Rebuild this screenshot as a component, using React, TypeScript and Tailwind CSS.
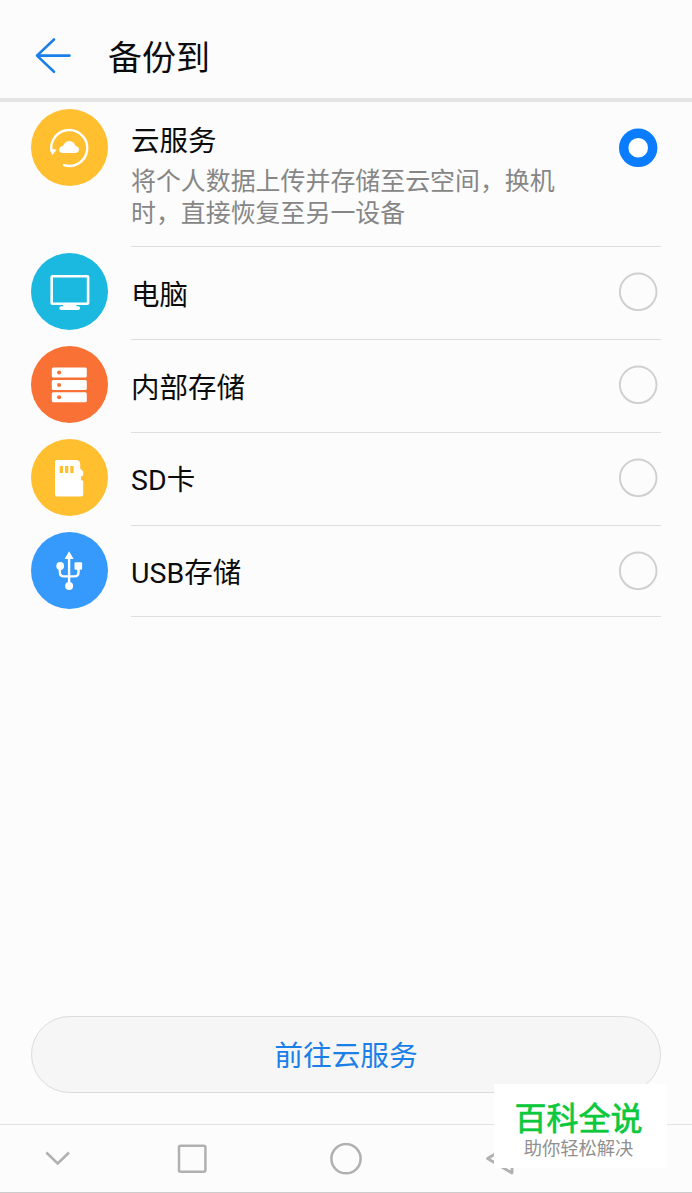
import type { ReactNode } from "react";

function CloudIcon() {
  return (
    <svg viewBox="0 0 77 77" className="size-full" fill="none">
      <path d="M20.500 42A18 18 0 1 1 33 56.200" stroke="#fff" strokeWidth="2.400" strokeLinecap="round" />
      <path d="M19 39.300l6.600 1.400-4.500 5.600z" fill="#fff" />
      <path
        d="M31.400 44a3.300 3.300 0 0 1-.8-6.500c1.400-.4 1.800-1.200 2.500-2.400 2.200-4.200 8.200-4.200 10.300-.4.700 1.300 1.100 2.200 2.400 2.700a3.400 3.400 0 0 1-.9 6.600z"
        fill="#fff"
      />
    </svg>
  );
}

function ComputerIcon() {
  return (
    <svg viewBox="0 0 77 77" className="size-full" fill="none">
      <rect x="20.700" y="23.200" width="36.400" height="27.600" rx=".8" stroke="#fff" strokeWidth="2.600" />
      <path d="M32 51h13.400v2.200h1.800a1.900 1.900 0 0 1 0 3.800H30.200a1.900 1.900 0 0 1 0-3.800H32z" fill="#fff" />
    </svg>
  );
}

function InternalIcon() {
  return (
    <svg viewBox="0 0 77 77" className="size-full" fill="#fff">
      <rect x="20.800" y="21.400" width="35" height="10.200" rx="1.500" />
      <rect x="20.800" y="33.900" width="35" height="10" rx="1.500" />
      <rect x="20.800" y="46.200" width="35" height="10" rx="1.500" />
      <g fill="#fa7136">
        <circle cx="28.100" cy="26.500" r="2" />
        <circle cx="28.100" cy="39" r="2" />
        <circle cx="28.100" cy="51.200" r="2" />
      </g>
    </svg>
  );
}

function SdIcon() {
  return (
    <svg viewBox="0 0 77 77" className="size-full">
      <path
        d="M26 21h19c2.600 0 4.200 1.600 4.200 4.200v3.300c0 1.200.6 1.700 1.500 2.400.9.600 1.500 1.300 1.500 2.500v3l-2.200 1v3.600l2.200.8V55.500c0 1.300-.7 2-2 2H26c-1.300 0-2-.7-2-2V23c0-1.300.7-2 2-2z"
        fill="#fff"
      />
      <path d="M28.700 27H32v7h-3.300zM34 27h3.300v7H34zM39.300 27h3.300v7h-3.300z" fill="#ffbf2e" />
    </svg>
  );
}

function UsbIcon() {
  return (
    <svg viewBox="0 0 77 77" className="size-full" fill="#fff">
      <path d="M38.100 19.200l4.500 7.800h-9z" />
      <circle cx="38.100" cy="54" r="4" />
      <circle cx="29.200" cy="34" r="3.900" />
      <rect x="43.500" y="30.300" width="7.600" height="7.400" rx="1" />
      <path
        d="M38.100 25v27M28.900 36v4.500c0 2.500 1.500 3.900 4 3.900h10.600c2.500 0 4-1.400 4-3.900V36"
        stroke="#fff"
        strokeWidth="2.400"
        fill="none"
      />
    </svg>
  );
}

function Radio({ checked }: { checked?: boolean }) {
  return (
    <svg viewBox="0 0 39 39" className="size-[39px] shrink-0">
      {checked ? (
        <circle cx="19.200" cy="19.800" r="14.500" fill="#fff" stroke="#0a7cff" strokeWidth="9.400" />
      ) : (
        <circle cx="19.200" cy="19.800" r="18.300" fill="none" stroke="#cfcfcf" strokeWidth="1.900" />
      )}
    </svg>
  );
}

type RowProps = { icon: ReactNode; color: string; label: string; height: string; labelTop: string };

function Row({ icon, color, label, height, labelTop }: RowProps) {
  return (
    <li className={`flex px-[31px] ${height}`}>
      <div className={`mt-[6px] size-[77px] shrink-0 rounded-full ${color}`}>{icon}</div>
      <div className="ml-[23px] flex flex-1 items-start justify-between border-b border-[#dedede] pr-[3px]">
        <span className={`text-[28.500px] leading-[42px] ${labelTop}`}>{label}</span>
        <span className="mt-[25px] flex">
          <Radio />
        </span>
      </div>
    </li>
  );
}

export default function App() {
  return (
    <div className="relative flex h-[1193px] w-[692px] flex-col overflow-hidden bg-[#fcfcfc] font-[Roboto,'Noto_Sans_CJK_SC',sans-serif] text-[#0c0c0c]">
      <header className="flex h-[102px] shrink-0 items-center border-b-4 border-[#e3e3e3] pt-[14px]">
        <svg viewBox="0 0 38 38" className="ml-[34px] size-[38px]" fill="none" stroke="#1b7fe8" strokeWidth="2.600" strokeLinecap="round" strokeLinejoin="round">
          <path d="M20 2.500L3 18.600l17 16.200M3 18.600h32.500" />
        </svg>
        <h1 className="ml-[36px] pt-[4px] text-[34px] leading-[50px]">备份到</h1>
      </header>

      <ul>
        <li className="flex h-[145px] px-[31px]">
          <div className="mt-[7px] size-[77px] shrink-0 rounded-full bg-[#ffbf2e]">
            <CloudIcon />
          </div>
          <div className="ml-[23px] flex flex-1 items-start justify-between border-b border-[#dedede] pr-[3px]">
            <div className="mt-[19px]">
              <div className="text-[28.500px] leading-[42px]">云服务</div>
              <p className="mt-[3px] whitespace-nowrap text-[24.930px] leading-[32px] text-[#868686]">
                将个人数据上传并存储至云空间，换机
                <br />
                时，直接恢复至另一设备
              </p>
            </div>
            <span className="mt-[26px] flex">
              <Radio checked />
            </span>
          </div>
        </li>
        <Row icon={<ComputerIcon />} color="bg-[#1bb8e0]" label="电脑" height="h-[93px]" labelTop="mt-[28px]" />
        <Row icon={<InternalIcon />} color="bg-[#fa7136]" label="内部存储" height="h-[93px]" labelTop="mt-[28px]" />
        <Row icon={<SdIcon />} color="bg-[#ffbf2e]" label="SD卡" height="h-[93px]" labelTop="mt-[27px]" />
        <Row icon={<UsbIcon />} color="bg-[#3699fc]" label="USB存储" height="h-[91px]" labelTop="mt-[27px]" />
      </ul>

      <button className="mx-[31px] mt-auto mb-[31px] h-[77px] shrink-0 rounded-full border border-[#dcdcdc] bg-[#f6f6f6] pt-[4px] text-[28.700px] text-[#1b7fe8]">
        前往云服务
      </button>

      <nav className="flex h-[69px] shrink-0 items-center border-t border-b border-t-[#e2e2e2] border-b-[#cccccc]">
        <svg viewBox="0 0 26 16" className="ml-[45px] h-[16px] w-[26px]" fill="none" stroke="#b0b0b0" strokeWidth="2.500">
          <path d="M1.300 1.500L12.700 12.500 24 1.500" />
        </svg>
        <svg viewBox="0 0 30 30" className="ml-[106px] size-[30px]" fill="none" stroke="#b0b0b0" strokeWidth="2.500">
          <rect x="2" y="1.700" width="26.400" height="26" rx="1.500" />
        </svg>
        <svg viewBox="0 0 32 32" className="ml-[123px] size-[32px]" fill="none" stroke="#b0b0b0" strokeWidth="2.500">
          <circle cx="16" cy="15.700" r="14.600" />
        </svg>
        <svg viewBox="0 0 30 34" className="ml-[123px] h-[34px] w-[30px]" fill="none" stroke="#b0b0b0" strokeWidth="2.800" strokeLinejoin="round">
          <path d="M2.500 16.500L27 2v29z" />
        </svg>
      </nav>

      <aside className="absolute top-[1084px] left-[494px] flex h-[84px] w-[173px] flex-col items-center bg-white pt-[16px] pr-[4px]">
        <strong className="text-[32px] leading-[38px] font-normal text-[#0cc83c] [-webkit-text-stroke:0.7px_#0cc83c]">百科全说</strong>
        <span className="text-[18.300px] leading-[22px] text-[#909090]">助你轻松解决</span>
      </aside>
    </div>
  );
}
